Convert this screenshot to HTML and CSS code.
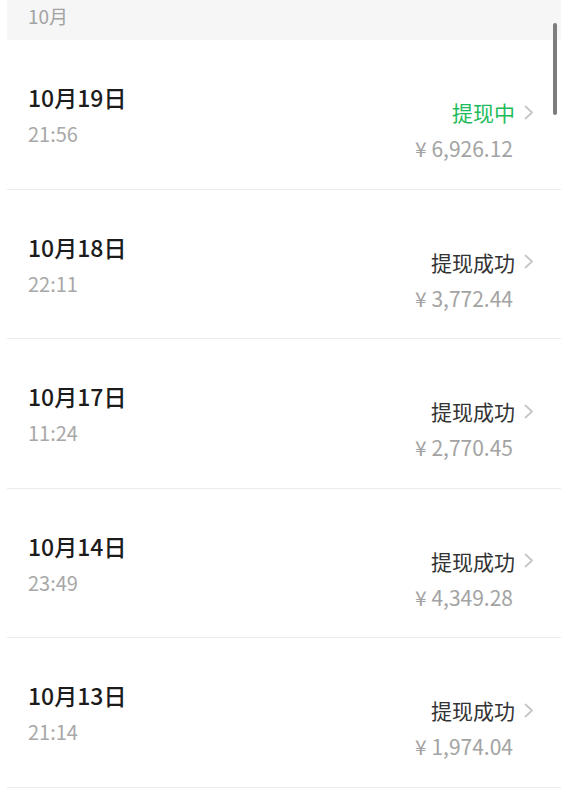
FILE: index.html
```html
<!DOCTYPE html>
<html lang="zh-CN">
<head>
<meta charset="utf-8">
<title>提现记录</title>
<link rel="stylesheet" href="styles.css">
</head>
<body>
<div class="page">
  <div class="month">10月</div>
  <ul class="list">
    <li class="row">
      <div class="left"><div class="date">10月19日</div><div class="time">21:56</div></div>
      <div class="right"><div class="status pending">提现中<svg class="chev" viewBox="0 0 10 15"><polyline points="1.5,1.5 8,7.5 1.5,13.5"/></svg></div><div class="amount">¥ 6,926.12</div></div>
    </li>
    <li class="row">
      <div class="left"><div class="date">10月18日</div><div class="time">22:11</div></div>
      <div class="right"><div class="status">提现成功<svg class="chev" viewBox="0 0 10 15"><polyline points="1.5,1.5 8,7.5 1.5,13.5"/></svg></div><div class="amount">¥ 3,772.44</div></div>
    </li>
    <li class="row">
      <div class="left"><div class="date">10月17日</div><div class="time">11:24</div></div>
      <div class="right"><div class="status">提现成功<svg class="chev" viewBox="0 0 10 15"><polyline points="1.5,1.5 8,7.5 1.5,13.5"/></svg></div><div class="amount">¥ 2,770.45</div></div>
    </li>
    <li class="row">
      <div class="left"><div class="date">10月14日</div><div class="time">23:49</div></div>
      <div class="right"><div class="status">提现成功<svg class="chev" viewBox="0 0 10 15"><polyline points="1.5,1.5 8,7.5 1.5,13.5"/></svg></div><div class="amount">¥ 4,349.28</div></div>
    </li>
    <li class="row">
      <div class="left"><div class="date">10月13日</div><div class="time">21:14</div></div>
      <div class="right"><div class="status">提现成功<svg class="chev" viewBox="0 0 10 15"><polyline points="1.5,1.5 8,7.5 1.5,13.5"/></svg></div><div class="amount">¥ 1,974.04</div></div>
    </li>
  </ul>
  <div class="scrollbar"></div>
</div>
</body>
</html>
```
FILE: styles.css
```css
html, body {
  margin: 0;
  padding: 0;
  background: #ffffff;
}
body {
  font-family: "Noto Sans CJK SC", "Noto Sans", sans-serif;
}
.page {
  position: relative;
  margin-left: 7px;
  width: 554px;
  background: #ffffff;
}
.month {
  height: 40px;
  box-sizing: border-box;
  background: #f6f6f6;
  color: #a3a3a3;
  font-size: 19px;
  line-height: 24px;
  padding: 4px 0 0 21px;
}
.list {
  list-style: none;
  margin: 0;
  padding: 0;
}
.row {
  display: flex;
  justify-content: space-between;
  align-items: flex-start;
  height: 149.5px;
  box-sizing: border-box;
  border-bottom: 1.5px solid #ebebeb;
  padding: 42px 27px 0 21px;
}
.date {
  font-size: 23px;
  line-height: 30px;
  font-weight: 500;
  color: #1c1c1c;
}
.time {
  font-size: 20px;
  line-height: 26px;
  color: #a8a8a8;
  margin-top: 9px;
}
.right {
  display: flex;
  flex-direction: column;
  align-items: flex-end;
  margin-top: 16px;
}
.status {
  display: flex;
  align-items: center;
  font-size: 21px;
  line-height: 28px;
  color: #333333;
}
.status.pending {
  color: #1dbb5b;
}
.chev {
  width: 10px;
  height: 15px;
  margin-left: 9px;
  fill: none;
  stroke: #c6c6c6;
  stroke-width: 1.8;
  stroke-linecap: round;
  stroke-linejoin: round;
}
.amount {
  font-size: 21px;
  line-height: 26px;
  color: #a3a3a3;
  margin-top: 9px;
  margin-right: 21px;
}
.scrollbar {
  position: absolute;
  top: 23px;
  left: 546px;
  width: 4px;
  height: 92px;
  border-radius: 2px;
  background: #7d7d7d;
}
```
